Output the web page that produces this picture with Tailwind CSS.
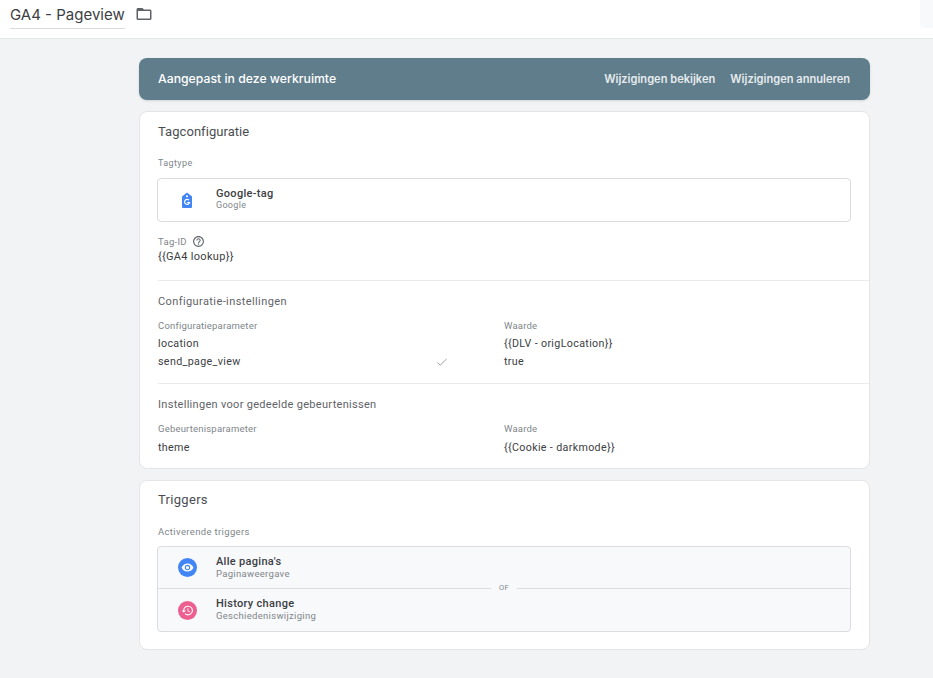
<!DOCTYPE html>
<html lang="en">
<head>
    <meta charset="UTF-8">
    <meta name="viewport" content="width=device-width, initial-scale=1.0">
    <title>GA4 - Pageview</title>
    <script src="https://cdn.jsdelivr.net/npm/@tailwindcss/browser@4"></script>
</head>
<body class="bg-[#f1f3f4] font-['Roboto',sans-serif] h-[678px] overflow-hidden">

    <!-- top bar -->
    <header class="h-[39px] bg-white border-b border-[#e6e8ea] flex items-start justify-between">
        <div class="flex items-start pl-[10px]">
            <h1 class="h-[29px] pt-[5px] text-[15px] leading-[20px] text-[#3c4043] border-b border-[#dadce0] font-['Inter',sans-serif] font-normal">GA4 - Pageview</h1>
            <svg class="ml-[10px] mt-[5px] w-[18px] h-[18px] text-[#5f6368]" viewBox="0 0 24 24" fill="currentColor"><path d="M20 6h-8l-2-2H4c-1.1 0-2 .9-2 2v12c0 1.1.9 2 2 2h16c1.1 0 2-.9 2-2V8c0-1.1-.9-2-2-2zm0 12H4V8h16v10z"/></svg>
        </div>
        <div class="w-[13px] h-[28px] bg-[#f8f9fa] rounded-bl"></div>
    </header>

    <main class="w-[731px] ml-[139px] mt-[19px]">

        <!-- banner -->
        <div class="h-[42px] bg-[#607d8b] rounded-lg shadow-sm flex items-center justify-between pl-[19px] pr-[20px] text-white">
            <span class="text-[12.25px] font-['Inter',sans-serif] font-medium">Aangepast in deze werkruimte</span>
            <div class="flex gap-[15px] text-[11.1px] font-['Inter',sans-serif] font-semibold text-[#e6ebee]">
                <span>Wijzigingen bekijken</span>
                <span>Wijzigingen annuleren</span>
            </div>
        </div>

        <!-- tag config -->
        <section class="mt-[11px] h-[358px] bg-white border border-[#e3e5e8] rounded-lg">
            <h2 class="pl-[18px] pt-[12px] text-[13px] leading-[16px] tracking-[0.05px] text-[#4a4e52] font-normal">Tagconfiguratie</h2>
            <p class="pl-[18px] mt-[17px] text-[9px] leading-[12px] tracking-[0.4px] text-[#80868b]">Tagtype</p>

            <div class="ml-[17px] mr-[18px] mt-[9px] h-[44px] border border-[#dadce0] rounded flex items-center">
                <div class="w-[58px] flex justify-center">
                    <svg class="w-[12px] h-[16px]" viewBox="0 0 12 16"><path fill="#4285f4" d="M1 4.6 6 .5l5 4.1V15a1 1 0 0 1-1 1H2a1 1 0 0 1-1-1z"/><circle cx="6" cy="4.2" r="1" fill="#fff"/><path fill="none" stroke="#fff" stroke-width="1.2" d="M8 8.2a2.5 2.5 0 1 0 .5 2.3H6.2"/></svg>
                </div>
                <div class="pb-[3px]">
                    <div class="text-[11px] leading-[13px] font-medium tracking-[0.3px] text-[#3c4043]">Google-tag</div>
                    <div class="text-[9px] leading-[11px] tracking-[0.3px] text-[#80868b]">Google</div>
                </div>
            </div>

            <div class="pl-[18px] mt-[13px] flex items-center text-[9.5px] leading-[12px] tracking-[0.3px] text-[#80868b]">
                Tag-ID
                <svg class="ml-[5px] w-[13px] h-[13px] text-[#5f6368]" viewBox="0 0 24 24" fill="currentColor"><path d="M11 18h2v-2h-2v2zm1-16C6.48 2 2 6.48 2 12s4.48 10 10 10 10-4.48 10-10S17.52 2 12 2zm0 18c-4.41 0-8-3.59-8-8s3.59-8 8-8 8 3.59 8 8-3.59 8-8 8zm0-14c-2.21 0-4 1.79-4 4h2c0-1.1.9-2 2-2s2 .9 2 2c0 2-3 1.75-3 5h2c0-2.25 3-2.5 3-5 0-2.21-1.79-4-4-4z"/></svg>
            </div>
            <p class="pl-[18px] mt-[1px] text-[11px] leading-[15px] tracking-[0.3px] text-[#3c4043]">{{GA4 lookup}}</p>

            <div class="ml-[18px] mt-[16px] border-t border-[#e8eaed]"></div>
            <h3 class="pl-[18px] mt-[13px] text-[11px] leading-[15px] tracking-[0.4px] text-[#5f6368] font-normal">Configuratie-instellingen</h3>

            <div class="pl-[18px] mt-[10px] grid grid-cols-[346px_1fr]">
                <span class="text-[9.5px] leading-[13px] tracking-[0.2px] text-[#80868b]">Configuratieparameter</span>
                <span class="text-[9.5px] leading-[13px] tracking-[0.2px] text-[#80868b]">Waarde</span>
            </div>
            <div class="pl-[18px] mt-[3px] h-[18px] grid grid-cols-[346px_1fr] items-center text-[10.7px] tracking-[0.35px] text-[#3c4043]">
                <span>location</span>
                <span>{{DLV - origLocation}}</span>
            </div>
            <div class="pl-[18px] h-[18px] grid grid-cols-[346px_1fr] items-center text-[10.7px] tracking-[0.35px] text-[#3c4043]">
                <div class="flex items-center justify-between pr-[56px]">
                    <span>send_page_view</span>
                    <svg class="w-[12px] h-[12px] text-[#80868b]" viewBox="0 0 12 12" fill="none" stroke="currentColor" stroke-width="0.8"><path d="M1.5 6.5 4.2 9.2 10.5 3"/></svg>
                </div>
                <span>true</span>
            </div>

            <div class="ml-[18px] mt-[12px] border-t border-[#e8eaed]"></div>
            <h3 class="pl-[18px] mt-[13px] text-[11px] leading-[15px] tracking-[0.3px] text-[#5f6368] font-normal">Instellingen voor gedeelde gebeurtenissen</h3>

            <div class="pl-[18px] mt-[10px] grid grid-cols-[346px_1fr]">
                <span class="text-[9.5px] leading-[13px] tracking-[0.2px] text-[#80868b]">Gebeurtenisparameter</span>
                <span class="text-[9.5px] leading-[13px] tracking-[0.2px] text-[#80868b]">Waarde</span>
            </div>
            <div class="pl-[18px] mt-[4px] h-[18px] grid grid-cols-[346px_1fr] items-center text-[10.7px] tracking-[0.35px] text-[#3c4043]">
                <span>theme</span>
                <span>{{Cookie - darkmode}}</span>
            </div>
        </section>

        <!-- triggers -->
        <section class="mt-[11px] h-[170px] bg-white border border-[#e3e5e8] rounded-lg">
            <h2 class="pl-[18px] pt-[11px] text-[13px] leading-[16px] tracking-[0.3px] text-[#4a4e52] font-normal">Triggers</h2>
            <p class="pl-[18px] mt-[18px] text-[9.5px] leading-[12px] tracking-[0.35px] text-[#80868b]">Activerende triggers</p>

            <div class="ml-[17px] mr-[18px] mt-[8px] h-[86px] bg-[#f8f9fa] border border-[#dadce0] rounded relative">
                <div class="h-[42px] flex items-center border-b border-[#dadce0]">
                    <div class="w-[58px] flex justify-center">
                        <div class="w-[19px] h-[19px] rounded-full bg-[#4285f4] flex items-center justify-center">
                            <svg class="w-[13px] h-[13px] text-white" viewBox="0 0 24 24" fill="currentColor"><path d="M12 4.5C7 4.5 2.73 7.61 1 12c1.73 4.39 6 7.5 11 7.5s9.27-3.11 11-7.5c-1.73-4.39-6-7.5-11-7.5zM12 17a5 5 0 1 1 0-10 5 5 0 0 1 0 10zm0-8a3 3 0 1 0 0 6 3 3 0 0 0 0-6z"/></svg>
                        </div>
                    </div>
                    <div class="pb-[1px]">
                        <div class="text-[11px] leading-[12px] font-medium tracking-[0.3px] text-[#3c4043]">Alle pagina's</div>
                        <div class="text-[9.5px] leading-[11px] tracking-[0.3px] text-[#80868b]">Paginaweergave</div>
                    </div>
                </div>
                <div class="h-[42px] flex items-center">
                    <div class="w-[58px] flex justify-center">
                        <div class="w-[19px] h-[19px] rounded-full bg-[#ec5f8f] flex items-center justify-center">
                            <svg class="w-[13px] h-[13px] text-white" viewBox="0 0 24 24" fill="currentColor"><path d="M13 3a9 9 0 0 0-9 9H1l3.89 3.89.07.14L9 12H6a7 7 0 1 1 2.05 4.95l-1.42 1.42A9 9 0 1 0 13 3zm-1 5v5l4.28 2.54.72-1.21-3.5-2.08V8H12z"/></svg>
                        </div>
                    </div>
                    <div class="pb-[1px]">
                        <div class="text-[11px] leading-[12px] font-medium tracking-[0.3px] text-[#3c4043]">History change</div>
                        <div class="text-[9.5px] leading-[11px] tracking-[0.3px] text-[#80868b]">Geschiedeniswijziging</div>
                    </div>
                </div>
                <span class="absolute left-[333px] top-[36px] px-[8px] bg-[#f8f9fa] text-[7.5px] leading-[10px] tracking-[0.4px] text-[#80868b]">OF</span>
            </div>
        </section>
    </main>

</body>
</html>
